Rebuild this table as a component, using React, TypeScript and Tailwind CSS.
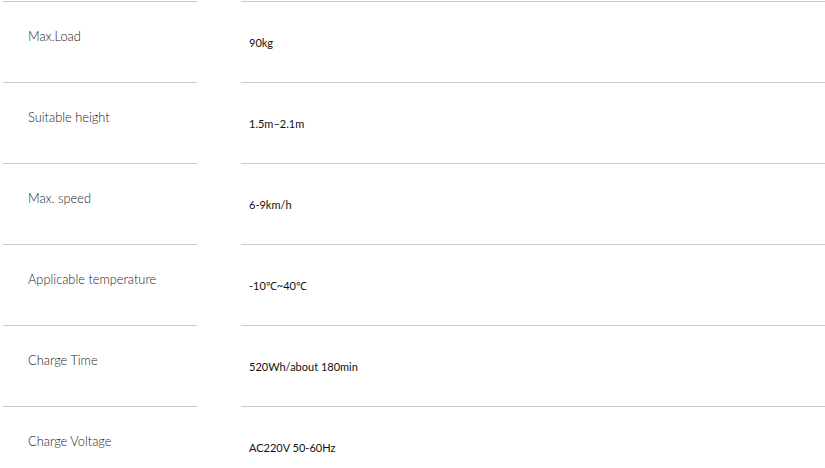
import React from "react";

const specs = [
  { label: "Max.Load", value: "90kg" },
  { label: "Suitable height", value: "1.5m–2.1m" },
  { label: "Max. speed", value: "6-9km/h" },
  { label: "Applicable temperature", value: "-10℃~40℃" },
  { label: "Charge Time", value: "520Wh/about 180min" },
  { label: "Charge Voltage", value: "AC220V 50-60Hz" },
];

export default function App() {
  return (
    <div
      className="w-[825px] h-[468px] overflow-hidden bg-white pt-[1px]"
      style={{ fontFamily: "Lato, 'Open Sans', sans-serif" }}
    >
      {specs.map((s) => (
        <div key={s.label} className="flex h-[81px]">
          <div className="ml-[3px] w-[194px] border-t border-[#cccccc] pl-[25px] pt-[24px] text-[12.8px] leading-[20px] font-light text-[#1a1a1a]">
            {s.label}
          </div>
          <div className="ml-[44px] flex-1 border-t border-[#cccccc] pl-[8px] pt-[33px] text-[11px] leading-[16px] text-[#111111]">
            {s.value}
          </div>
        </div>
      ))}
    </div>
  );
}
